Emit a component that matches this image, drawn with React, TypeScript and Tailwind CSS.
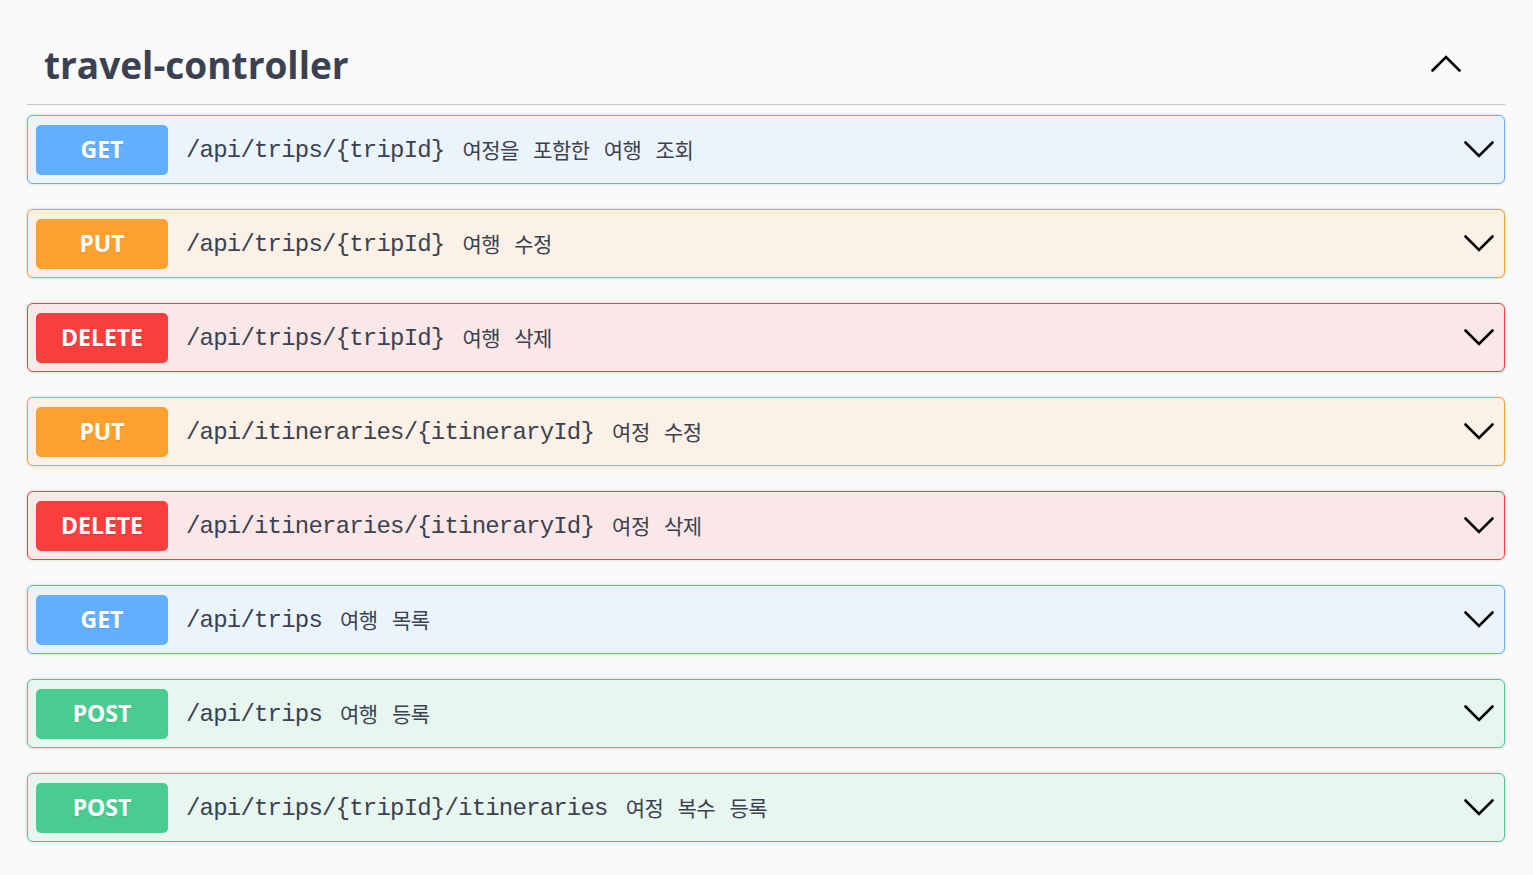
const ops = [
  { method: 'GET', path: '/api/trips/{tripId}', desc: '여정을 포함한 여행 조회' },
  { method: 'PUT', path: '/api/trips/{tripId}', desc: '여행 수정' },
  { method: 'DELETE', path: '/api/trips/{tripId}', desc: '여행 삭제' },
  { method: 'PUT', path: '/api/itineraries/{itineraryId}', desc: '여정 수정' },
  { method: 'DELETE', path: '/api/itineraries/{itineraryId}', desc: '여정 삭제' },
  { method: 'GET', path: '/api/trips', desc: '여행 목록' },
  { method: 'POST', path: '/api/trips', desc: '여행 등록' },
  { method: 'POST', path: '/api/trips/{tripId}/itineraries', desc: '여정 복수 등록' },
];

const styles: Record<string, { row: string; badge: string }> = {
  GET: { row: 'bg-[#ebf3fb] border-[#61affe]', badge: 'bg-[#61affe]' },
  PUT: { row: 'bg-[#fbf1e6] border-[#fca130]', badge: 'bg-[#fca130]' },
  DELETE: { row: 'bg-[#fae7e7] border-[#f93e3e]', badge: 'bg-[#f93e3e]' },
  POST: { row: 'bg-[#e8f6f0] border-[#49cc90]', badge: 'bg-[#49cc90]' },
};

const Chevron = ({ up }: { up?: boolean }) => (
  <svg width="30" height="18" viewBox="0 0 30 18" fill="none">
    <polyline
      points={up ? '1.5,16.5 15,3 28.5,16.5' : '1.5,1.5 15,15 28.5,1.5'}
      stroke="#000"
      strokeWidth="2.6"
      strokeLinecap="round"
      strokeLinejoin="miter"
    />
  </svg>
);

export default function App() {
  return (
    <div className="min-h-screen bg-[#fafafa] pt-[21px] pl-[27px] pr-[28px] text-[#3b4151] font-['Open_Sans',sans-serif]">
      <div className="flex h-[84px] items-center justify-between border-b border-[#c4c6cb] pl-[17px] pr-[44px]">
        <h3 className="pt-[3px] text-[37px] font-bold leading-none">travel-controller</h3>
        <Chevron up />
      </div>
      <div className="mt-[10px] flex flex-col gap-[25px]">
        {ops.map((op, i) => (
          <div
            key={i}
            className={`flex h-[69px] items-center rounded-[6px] border pl-[8px] pr-[10px] shadow-[0_0_3px_rgba(0,0,0,0.19)] ${styles[op.method].row}`}
          >
            <span
              className={`flex h-[50px] w-[132px] shrink-0 items-center justify-center rounded-[5px] text-[23px] font-bold text-white [text-shadow:0_1px_0_rgba(0,0,0,0.1)] ${styles[op.method].badge}`}
            >
              {op.method}
            </span>
            <span className="ml-[18px] pt-[2px] font-['Liberation_Mono',monospace] text-[24px] tracking-[-0.8px] text-[#3b4151]">
              {op.path}
            </span>
            <span className="ml-[18px] flex-1 font-['Noto_Sans_CJK_KR',sans-serif] text-[21px] tracking-[-0.5px] text-[#3b4151] [word-spacing:10px]">
              {op.desc}
            </span>
            <Chevron />
          </div>
        ))}
      </div>
    </div>
  );
}
